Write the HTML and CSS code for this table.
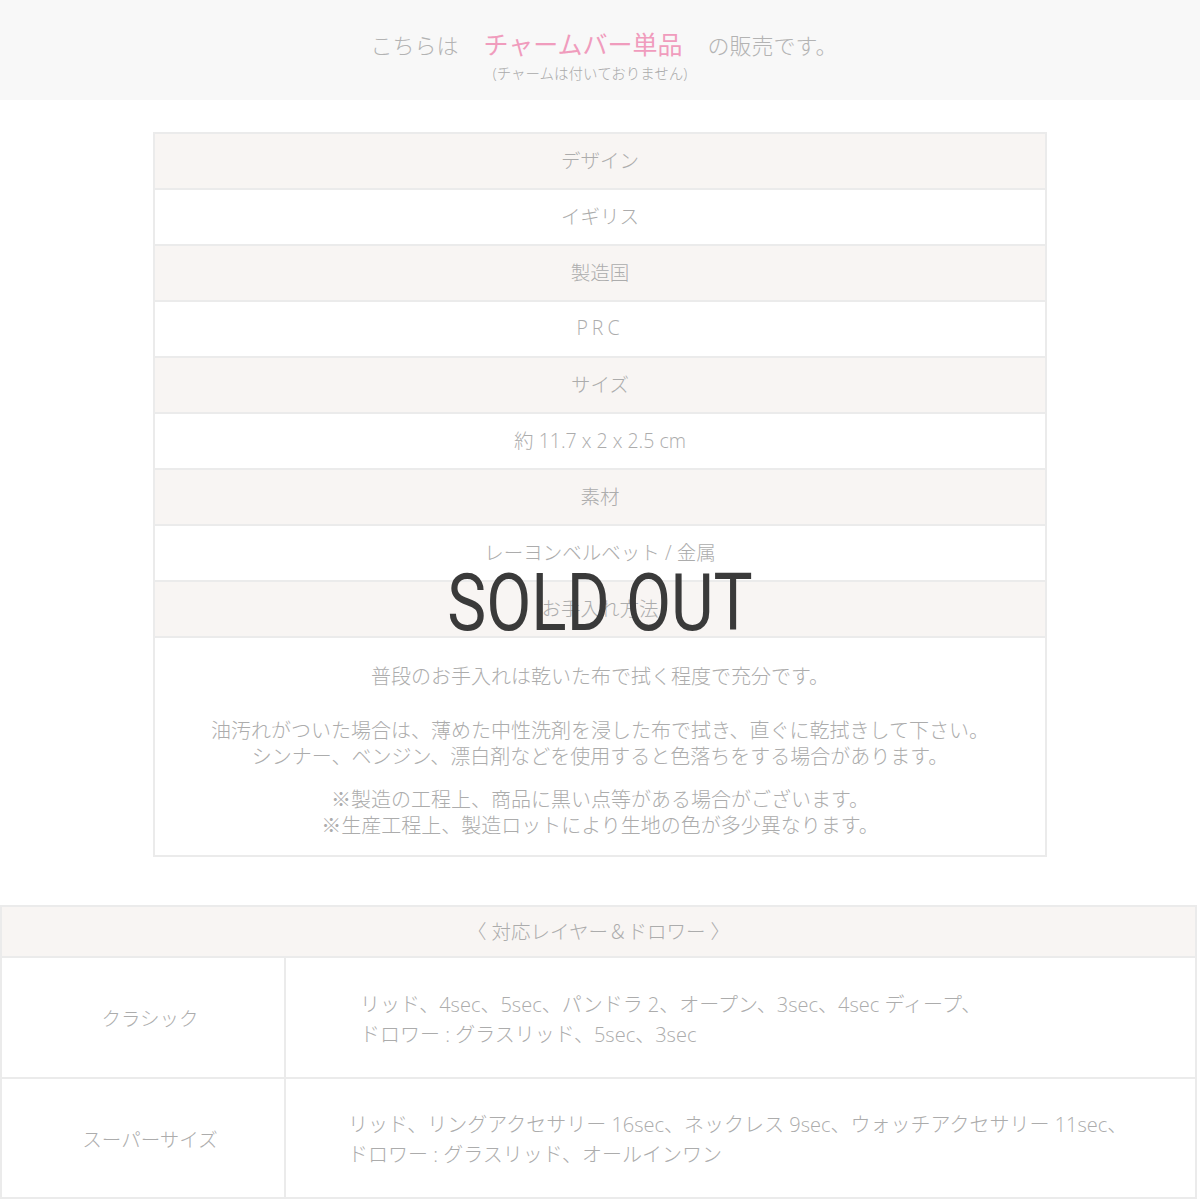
FILE: index.html
```html
<!DOCTYPE html>
<html lang="ja">
<head>
<meta charset="utf-8">
<link rel="stylesheet" href="styles.css">
</head>
<body>
<div class="banner">
  <div class="banner-line"><span>こちらは</span><span class="pink">チャームバー単品</span><span>の販売です。</span></div>
  <div class="banner-sub">(チャームは付いておりません)</div>
</div>

<div class="spec-wrap">
  <div class="spec">
    <div class="row head">デザイン</div>
    <div class="row">イギリス</div>
    <div class="row head">製造国</div>
    <div class="row spaced">PRC</div>
    <div class="row head">サイズ</div>
    <div class="row">約 11.7 x 2 x 2.5 cm</div>
    <div class="row head">素材</div>
    <div class="row">レーヨンベルベット / 金属</div>
    <div class="row head">お手入れ方法</div>
    <div class="row body">
      <p>普段のお手入れは乾いた布で拭く程度で充分です。</p>
      <p class="gap">油汚れがついた場合は、薄めた中性洗剤を浸した布で拭き、直ぐに乾拭きして下さい。<br>シンナー、ベンジン、漂白剤などを使用すると色落ちをする場合があります。</p>
      <p class="gap2">※製造の工程上、商品に黒い点等がある場合がございます。<br>※生産工程上、製造ロットにより生地の色が多少異なります。</p>
    </div>
  </div>
  <div class="soldout">SOLD OUT</div>
</div>

<div class="compat">
  <div class="compat-head">〈 対応レイヤー＆ドロワー 〉</div>
  <div class="compat-row">
    <div class="compat-name">クラシック</div>
    <div class="compat-desc p1">リッド、4sec、5sec、パンドラ 2、オープン、3sec、4sec ディープ、<br>ドロワー : グラスリッド、5sec、3sec</div>
  </div>
  <div class="compat-row">
    <div class="compat-name">スーパーサイズ</div>
    <div class="compat-desc p2">リッド、リングアクセサリー 16sec、ネックレス 9sec、ウォッチアクセサリー 11sec、<br>ドロワー : グラスリッド、オールインワン</div>
  </div>
</div>
</body>
</html>
```

FILE: styles.css
```css
* { box-sizing: border-box; }
html, body { margin: 0; padding: 0; background: #fff; }
body {
  width: 1200px;
  font-family: "Open Sans", "Noto Sans CJK JP", sans-serif;
  font-weight: 300;
  color: #b0b0b0;
}
.banner {
  height: 100px;
  background: #f8f8f8;
  display: flex;
  flex-direction: column;
  align-items: center;
  padding-top: 29px;
}
.banner-line {
  display: flex;
  align-items: baseline;
  gap: 25px;
  font-size: 22px;
  line-height: 30px;
  color: #b3b3b3;
  margin-left: 8px;
}
.banner-line .pink {
  color: #f09cbd;
  font-size: 25px;
  font-weight: 400;
}
.banner-sub {
  font-size: 14.5px;
  line-height: 18px;
  color: #aaa;
  margin-top: 5px;
  margin-left: -20px;
}
.spec-wrap {
  position: relative;
  width: 894px;
  margin: 32px auto 0;
}
.spec {
  border: 2px solid #ebebeb;
}
.row {
  height: 56px;
  border-top: 2px solid #ebebeb;
  display: flex;
  align-items: center;
  justify-content: center;
  font-size: 19.5px;
  color: #acacac;
  background: #fff;
  padding-bottom: 3px;
}
.row:first-child { border-top: none; height: 54px; }
.row.head { background: #f8f5f3; }
.row.spaced { letter-spacing: 4px; }
.row.body {
  height: auto;
  flex-direction: column;
  padding: 26px 0 16px;
  text-align: center;
  line-height: 26px;
  font-size: 20px;
}
.row.body p { margin: 0; }
.row.body .gap { margin-top: 28px; }
.row.body .gap2 { margin-top: 17px; }
.soldout {
  position: absolute;
  left: 0;
  right: 0;
  top: 421px;
  text-align: center;
  font-family: "Roboto", sans-serif;
  font-weight: 400;
  font-size: 79px;
  line-height: 100px;
  color: #3a3a3a;
  transform: scaleX(0.83);
}
.compat {
  margin: 48px 3px 0 0;
  border: 2px solid #ebebeb;
}
.compat-head {
  height: 49px;
  background: #f8f5f3;
  display: flex;
  align-items: center;
  justify-content: center;
  font-size: 19.5px;
  color: #acacac;
  padding-bottom: 2px;
}
.compat-row {
  display: grid;
  grid-template-columns: 284px 1fr;
  border-top: 2px solid #ebebeb;
  height: 121px;
}
.compat-row + .compat-row { height: 120px; }
.compat-name {
  display: flex;
  align-items: center;
  justify-content: center;
  font-size: 19.5px;
  color: #acacac;
  border-right: 2px solid #ebebeb;
  padding-left: 14px;
}
.compat-desc {
  display: flex;
  align-items: center;
  font-size: 20px;
  line-height: 30px;
  color: #acacac;
  padding-top: 4px;
}
.compat-desc.p1 { padding-left: 74px; }
.compat-desc.p2 { padding-left: 62px; }
```
